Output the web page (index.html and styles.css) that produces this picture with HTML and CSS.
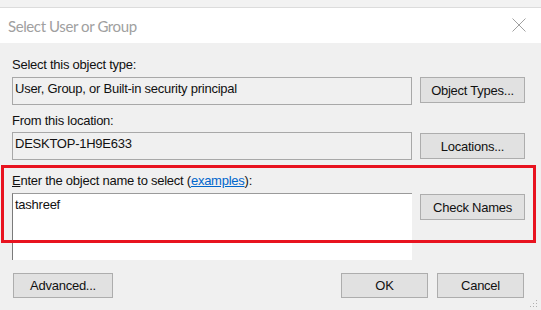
FILE: index.html
```html
<!DOCTYPE html>
<html lang="en">
<head>
  <meta charset="UTF-8" />
  <title>Select User or Group</title>
  <link rel="stylesheet" href="styles.css">
</head>
<body>
  <div class="dialog">
    <div class="top-strip"></div>
    <div class="titlebar">
      <span class="title">Select User or Group</span>
      <svg class="close" width="14" height="14" viewBox="0 0 14 14" aria-label="Close">
        <path d="M0.5 0.5 L13.5 13.5 M13.5 0.5 L0.5 13.5" stroke="#a0a0a0" stroke-width="1" fill="none"/>
      </svg>
    </div>

    <div class="content">
      <div class="label first">Select this object type:</div>
      <div class="row">
        <div class="field">User, Group, or Built-in security principal</div>
        <button class="btn">Object Types...</button>
      </div>

      <div class="label">From this location:</div>
      <div class="row tight">
        <div class="field">DESKTOP-1H9E633</div>
        <button class="btn low">Locations...</button>
      </div>

      <div class="label names-label"><u>E</u>nter the object name to select (<a href="#">examples</a>):</div>
      <div class="row tight">
        <div class="names">tashreef</div>
        <button class="btn low">Check Names</button>
      </div>

      <div class="actions">
        <button class="btn advanced">Advanced...</button>
        <span class="spacer"></span>
        <button class="btn small">OK</button>
        <button class="btn small">Cancel</button>
      </div>
    </div>

    <div class="highlight"></div>
    <svg class="grip" width="8" height="8" viewBox="0 0 8 8">
      <rect x="6" y="0" width="1" height="1" fill="#b0b0b0"/>
      <rect x="3" y="3" width="1" height="1" fill="#b0b0b0"/>
      <rect x="6" y="3" width="1" height="1" fill="#b0b0b0"/>
      <rect x="0" y="6" width="1" height="1" fill="#b0b0b0"/>
      <rect x="3" y="6" width="1" height="1" fill="#b0b0b0"/>
      <rect x="6" y="6" width="1" height="1" fill="#b0b0b0"/>
    </svg>
  </div>
</body>
</html>
```

FILE: styles.css
```css
body {
  margin: 0;
  padding: 0;
  background-color: #f0f0f0;
  font-family: 'Liberation Sans', Arial, sans-serif;
  font-size: 13px;
  letter-spacing: -0.25px;
  color: #111;
}
.dialog {
  position: relative;
  width: 541px;
  height: 310px;
  background-color: #f0f0f0;
  overflow: hidden;
  display: flex;
  flex-direction: column;
}
.top-strip {
  height: 7px;
  background-color: #f2f2f2;
  border-bottom: 1px solid #dcdcdc;
}
.titlebar {
  height: 35px;
  background-color: #ffffff;
  display: flex;
  align-items: center;
  padding-left: 8px;
  padding-right: 15px;
}
.title {
  font-family: Lato, sans-serif;
  font-size: 15px;
  letter-spacing: -0.4px;
  color: #a0a0a0;
  flex: 1;
}
.close {
  display: block;
  margin-top: -1px;
}
.content {
  padding: 0 16px 0 12px;
  display: flex;
  flex-direction: column;
}
.label {
  height: 16px;
  line-height: 16px;
  margin-top: 8px;
  margin-bottom: 3px;
}
.label.first {
  margin-top: 14px;
  margin-bottom: 4px;
}
.label.names-label {
  margin-top: 13px;
  margin-bottom: 4px;
}
.label a {
  color: #0066cc;
}
.row {
  display: flex;
  align-items: flex-start;
  gap: 8px;
}
.field {
  box-sizing: border-box;
  width: 400px;
  height: 28px;
  border: 1px solid #a8a8a8;
  background-color: #f0f0f0;
  padding: 3px 2px;
  line-height: 16px;
}
.names {
  box-sizing: border-box;
  width: 400px;
  height: 67px;
  background-color: #ffffff;
  border-top: 1px solid #9a9a9a;
  border-left: 1px solid #7a7a7a;
  padding: 3px 2px;
  line-height: 16px;
}
.btn {
  box-sizing: border-box;
  width: 105px;
  height: 26px;
  padding: 0;
  border: 1px solid #adadad;
  background-color: #e1e1e1;
  font-family: 'Liberation Sans', Arial, sans-serif;
  font-size: 13px;
  letter-spacing: -0.25px;
  color: #111;
}
.btn.low {
  margin-top: 1px;
}
.actions {
  display: flex;
  gap: 9px;
  margin-top: 13px;
  padding-left: 1px;
  padding-right: 1px;
}
.actions .btn {
  height: 25px;
}
.btn.advanced {
  width: 100px;
}
.btn.small {
  width: 87px;
}
.spacer {
  flex: 1;
}
.highlight {
  position: absolute;
  left: 1px;
  top: 165px;
  width: 529px;
  height: 72px;
  border: 3px solid #e8131f;
}
.grip {
  position: absolute;
  right: 3px;
  bottom: 2px;
}
```
